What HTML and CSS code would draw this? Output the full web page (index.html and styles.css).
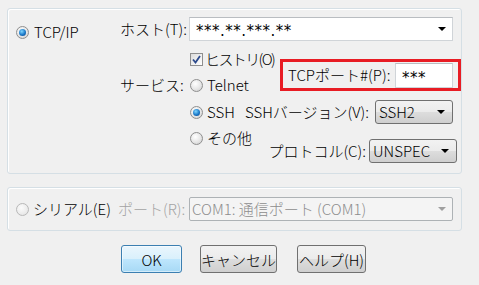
FILE: index.html
```html
<!DOCTYPE html>
<html lang="ja">
<head>
    <meta charset="UTF-8">
    <title>新しい接続</title>
    <link rel="stylesheet" href="styles.css">
</head>
<body>
    <div class="dialog">
        <div class="group group-tcp">
            <div class="proto">
                <div class="radio-line"><span class="radio on"></span>TCP/IP</div>
            </div>
            <div class="settings">
                <div class="host-row">
                    <span class="field-label">ホスト(T):</span>
                    <div class="combo edit host-combo"><span class="masked">***.**.***.**</span><span class="arrow"></span></div>
                </div>
                <div class="service-row">
                    <span class="field-label service-label">サービス:</span>
                    <div class="service-body">
                        <div class="service-top">
                            <div class="service-left">
                                <div class="check-line">
                                    <span class="checkbox">
                                        <svg width="9" height="9" viewBox="0 0 9 9"><path d="M1 4.5 L3.5 7.5 L8 1" fill="none" stroke="#2c4a8c" stroke-width="1.8"/></svg>
                                    </span><span class="check-text">ヒストリ(O)</span>
                                </div>
                                <div class="radio-line telnet"><span class="radio"></span>Telnet</div>
                            </div>
                            <div class="port-box">
                                <span>TCPポート#(P):</span>
                                <div class="edit port-input"><span class="masked">***</span></div>
                            </div>
                        </div>
                        <div class="ssh-row">
                            <div class="radio-line ssh"><span class="radio on"></span>SSH</div>
                            <span class="opt-label">SSHバージョン(V):</span>
                            <div class="dropdown ssh-select"><span>SSH2</span><span class="arrow"></span></div>
                        </div>
                        <div class="other-row">
                            <div class="radio-line"><span class="radio"></span>その他</div>
                            <div class="protocol">
                                <span class="opt-label">プロトコル(C):</span>
                                <div class="dropdown proto-select"><span>UNSPEC</span><span class="arrow"></span></div>
                            </div>
                        </div>
                    </div>
                </div>
            </div>
        </div>

        <div class="group group-serial">
            <div class="proto">
                <div class="radio-line"><span class="radio off"></span>シリアル(E)</div>
            </div>
            <span class="field-label disabled">ポート(R):</span>
            <div class="combo combo-disabled"><span>COM1: 通信ポート (COM1)</span><span class="arrow"></span></div>
        </div>

        <div class="buttons">
            <button class="btn btn-default btn-ok">OK</button>
            <button class="btn btn-cancel">キャンセル</button>
            <button class="btn btn-help">ヘルプ(H)</button>
        </div>
    </div>
</body>
</html>
```

FILE: styles.css
```css
body {
    margin: 0;
    background: #f0f0f0;
    font-family: "Noto Sans CJK JP", "Noto Sans", sans-serif;
    font-size: 15px;
    font-weight: 300;
    line-height: 18px;
    color: #000;
}

.dialog {
    padding: 8px 0 0 7px;
}

.group {
    width: 455px;
    box-sizing: border-box;
    border: 1px solid #d5dfe5;
    border-radius: 3px;
    box-shadow: inset 1px 1px 0 #fff;
    display: flex;
}

.group-tcp {
    height: 166px;
}

.proto {
    width: 110px;
    padding-left: 8px;
    box-sizing: border-box;
    flex-shrink: 0;
}

.group-tcp .proto {
    padding-top: 14px;
}

.radio-line,
.check-line {
    display: flex;
    align-items: center;
    height: 18px;
    white-space: nowrap;
}

.radio {
    width: 13px;
    height: 13px;
    box-sizing: border-box;
    border-radius: 50%;
    border: 1px solid #8f8f8f;
    background: radial-gradient(circle at 40% 35%, #ffffff 0%, #e6e6e6 55%, #c9c9c9 100%);
    margin-right: 4px;
    position: relative;
    flex-shrink: 0;
}

.radio.on::after {
    content: "";
    position: absolute;
    left: 2px;
    top: 2px;
    width: 7px;
    height: 7px;
    border-radius: 50%;
    background: radial-gradient(circle at 40% 35%, #7fd6ff 0%, #1a78c8 55%, #0b3f7e 100%);
}

.radio.off {
    border-color: #b8b8b8;
    background: radial-gradient(circle at 40% 35%, #fbfbfb 0%, #ececec 60%, #dcdcdc 100%);
}

.group-tcp .proto .radio {
    margin-right: 5px;
}

.checkbox {
    width: 13px;
    height: 13px;
    box-sizing: border-box;
    border: 1px solid #8f8f8f;
    background: linear-gradient(135deg, #dcdcdc, #ffffff);
    display: flex;
    align-items: center;
    justify-content: center;
    margin-right: 2px;
}

.check-text {
    letter-spacing: -1.6px;
}

.masked {
    font-family: "DejaVu Sans", sans-serif;
    font-weight: 400;
    font-size: 15px;
    letter-spacing: 0.5px;
    position: relative;
    top: 2px;
}

.settings {
    width: 335px;
    flex-shrink: 0;
}

.field-label {
    width: 71px;
    padding-left: 2px;
    box-sizing: border-box;
    flex-shrink: 0;
    white-space: nowrap;
}

.field-label.disabled {
    color: #a3a3a3;
    padding-left: 0;
}

.host-row {
    display: flex;
    align-items: center;
    margin-top: 8px;
}

.combo,
.dropdown {
    height: 24px;
    box-sizing: border-box;
    display: flex;
    align-items: center;
    justify-content: space-between;
    white-space: nowrap;
}

.edit {
    background: #fff;
    border: 1px solid #d0d4d8;
    border-top-color: #b9bdc1;
}

.host-combo {
    width: 264px;
    padding: 0 6px 0 6px;
    font-size: 14px;
}

.arrow {
    width: 0;
    height: 0;
    border-left: 4px solid transparent;
    border-right: 4px solid transparent;
    border-top: 4px solid #000;
}

.service-row {
    display: flex;
    align-items: flex-start;
}

.service-label {
    margin-top: 35px;
}

.service-body {
    width: 264px;
}

.service-top {
    display: flex;
    align-items: flex-start;
}

.service-left {
    width: 91px;
    flex-shrink: 0;
    padding-left: 1px;
    box-sizing: border-box;
}

.check-line {
    margin-top: 9px;
}

.telnet {
    margin-top: 8px;
}

.port-box {
    margin-top: 18px;
    width: 181px;
    height: 32px;
    box-sizing: border-box;
    flex-shrink: 0;
    border: 3px solid #e81c24;
    display: flex;
    align-items: center;
    justify-content: space-between;
    padding: 0 5px 0 5px;
    white-space: nowrap;
}

.port-input {
    width: 58px;
    height: 25px;
    box-sizing: border-box;
    padding-left: 6px;
    line-height: 23px;
    font-size: 14px;
}

.ssh-row {
    display: flex;
    align-items: center;
    margin-top: 6px;
    height: 24px;
}

.ssh {
    width: 56px;
    padding-left: 1px;
    box-sizing: border-box;
    flex-shrink: 0;
}

.opt-label {
    white-space: nowrap;
}

.dropdown {
    border: 1px solid #707070;
    border-radius: 3px;
    background: linear-gradient(#f2f2f2 0%, #ebebeb 50%, #dddddd 51%, #cfcfcf 100%);
    padding: 0 7px 0 3px;
}

.ssh-select {
    width: 78px;
    margin-left: auto;
}

.other-row {
    display: flex;
    align-items: flex-start;
    margin-top: 5px;
}

.other-row .radio-line {
    padding-left: 1px;
}

.protocol {
    display: flex;
    align-items: center;
    margin-top: 10px;
    margin-left: auto;
    margin-right: -4px;
}

.proto-select {
    width: 88px;
    margin-left: 3px;
}

.group-serial {
    margin-top: 13px;
    height: 44px;
    align-items: center;
}

.combo-disabled {
    width: 264px;
    background: #f4f4f4;
    border: 1px solid #adb2b5;
    border-radius: 2px;
    color: #8d8d8d;
    padding: 0 6px 0 2px;
}

.combo-disabled .arrow {
    border-top-color: #a0a0a0;
}

.buttons {
    display: flex;
    margin: 14px 0 0 114px;
}

.btn {
    height: 28px;
    box-sizing: border-box;
    border: 1px solid #707070;
    border-radius: 3px;
    background: linear-gradient(#f2f2f2 0%, #ebebeb 50%, #dddddd 51%, #cfcfcf 100%);
    font-family: inherit;
    font-size: 15px;
    font-weight: 300;
    color: #000;
    padding: 0;
    white-space: nowrap;
}

.btn-default {
    border-color: #3c7fb1;
    background: linear-gradient(#eaf6fd 0%, #d9f0fc 50%, #bee6fd 51%, #a7d9f5 100%);
    box-shadow: inset 0 0 0 1px rgba(255, 255, 255, 0.5);
}

.btn-ok {
    width: 61px;
}

.btn-cancel {
    width: 77px;
    margin-left: 18px;
}

.btn-help {
    width: 69px;
    margin-left: 20px;
}
```
